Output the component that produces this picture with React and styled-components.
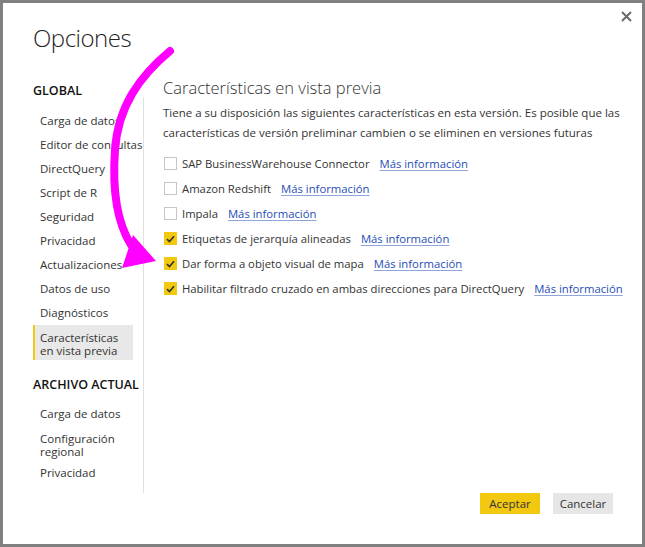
import styled, { createGlobalStyle } from "styled-components";

const GlobalStyle = createGlobalStyle`
  html, body {
    margin: 0;
    padding: 0;
    background: #ffffff;
  }

  body {
    font-family: "Open Sans", "Noto Sans", sans-serif;
    color: #333333;
  }
`;

const Dialog = styled.div`
  position: relative;
  box-sizing: border-box;
  width: 645px;
  height: 547px;
  border: 3px solid #808080;
  background: #ffffff;
  display: flex;
  flex-direction: column;
  overflow: hidden;
`;

const Header = styled.header`
  display: flex;
  justify-content: space-between;
  align-items: flex-start;
  height: 73px;
  padding: 0 10px 0 30px;
  box-sizing: border-box;
`;

const Title = styled.h1`
  margin: 19px 0 0;
  font-size: 24px;
  font-weight: 300;
  letter-spacing: -0.5px;
  line-height: 32px;
  color: #252423;
`;

const CloseButton = styled.button`
  margin-top: 8px;
  padding: 0;
  width: 11px;
  height: 11px;
  border: none;
  background: none;
  display: flex;
  cursor: pointer;
`;

const Body = styled.div`
  display: grid;
  grid-template-columns: 140px 1px 1fr;
  height: 417px;
`;

const Sidebar = styled.nav`
  display: flex;
  flex-direction: column;
  padding-left: 30px;
`;

const SectionLabel = styled.div`
  margin-top: ${(p) => p.$top}px;
  font-size: 12.5px;
  font-weight: 600;
  line-height: 16px;
  color: #111111;
  white-space: nowrap;
`;

const NavList = styled.ul`
  list-style: none;
  margin: ${(p) => p.$top}px 0 0;
  padding: 0;
  width: 100px;
`;

const NavItem = styled.li`
  box-sizing: border-box;
  padding: ${(p) => (p.$double ? "6px 0 3px 5px" : "0 0 0 5px")};
  line-height: ${(p) => (p.$double ? "13px" : "24px")};
  white-space: ${(p) => (p.$double ? "normal" : "nowrap")};
  font-size: 11.5px;
  color: #333333;
  border-left: 2px solid ${(p) => (p.$active ? "#f2c811" : "transparent")};
  background: ${(p) => (p.$active ? "#e8e8e8" : "transparent")};
`;

const Divider = styled.div`
  margin-top: 21px;
  background: #e1e1e1;
`;

const Content = styled.section`
  padding: 1px 0 0 19px;
  min-width: 0;
`;

const Heading = styled.h2`
  margin: 0;
  font-size: 16.5px;
  font-weight: 300;
  line-height: 22px;
  color: #333333;
`;

const Description = styled.p`
  margin: 4px 20px 0 0;
  font-size: 11.5px;
  line-height: 20px;
  color: #333333;
`;

const FeatureList = styled.ul`
  list-style: none;
  margin: 8px 0 0;
  padding: 0;
`;

const FeatureRow = styled.li`
  display: flex;
  align-items: center;
  height: 25px;
  font-size: 11.3px;
  color: #333333;
  white-space: nowrap;
`;

const Box = styled.span`
  box-sizing: border-box;
  flex: none;
  width: 13px;
  height: 13px;
  margin: 0 5px 0 1px;
  display: flex;
  align-items: center;
  justify-content: center;
  border: ${(p) => (p.$checked ? "none" : "1px solid #c6c6c6")};
  background: ${(p) => (p.$checked ? "#f2c811" : "#ffffff")};
`;

const Link = styled.a`
  margin-left: 10px;
  color: #1f4db5;
  text-decoration: underline;
  text-decoration-color: #8fa6da;
  text-underline-offset: 2px;
`;

const Footer = styled.footer`
  display: flex;
  justify-content: flex-end;
  gap: 13px;
  padding-right: 29px;
`;

const Button = styled.button`
  width: 60px;
  height: 21px;
  padding: 0;
  border: none;
  font-family: "Open Sans", "Noto Sans", sans-serif;
  font-size: 11.5px;
  color: #333333;
  background: ${(p) => (p.$primary ? "#f2c811" : "#e6e6e6")};
  cursor: pointer;
`;

const Overlay = styled.svg`
  position: absolute;
  left: -3px;
  top: -3px;
  width: 645px;
  height: 547px;
  pointer-events: none;
`;

const globalItems = [
  "Carga de datos",
  "Editor de consultas",
  "DirectQuery",
  "Script de R",
  "Seguridad",
  "Privacidad",
  "Actualizaciones",
  "Datos de uso",
  "Diagnósticos",
];

const features = [
  { label: "SAP BusinessWarehouse Connector", checked: false },
  { label: "Amazon Redshift", checked: false },
  { label: "Impala", checked: false },
  { label: "Etiquetas de jerarquía alineadas", checked: true },
  { label: "Dar forma a objeto visual de mapa", checked: true },
  {
    label: "Habilitar filtrado cruzado en ambas direcciones para DirectQuery",
    checked: true,
  },
];

function Check() {
  return (
    <svg width="9" height="8" viewBox="0 0 9 8">
      <path d="M1 4.2 L3.5 6.6 L8 1.2" fill="none" stroke="#333" strokeWidth="1.6" />
    </svg>
  );
}

export default function App() {
  return (
    <>
      <GlobalStyle />
      <Dialog>
        <Header>
          <Title>Opciones</Title>
          <CloseButton aria-label="Cerrar">
            <svg width="11" height="11" viewBox="0 0 11 11">
              <path d="M1 1 L10 10 M10 1 L1 10" stroke="#6a6a6a" strokeWidth="2" />
            </svg>
          </CloseButton>
        </Header>

        <Body>
          <Sidebar>
            <SectionLabel $top={7}>GLOBAL</SectionLabel>
            <NavList $top={10}>
              {globalItems.map((item) => (
                <NavItem key={item}>{item}</NavItem>
              ))}
              <NavItem $double $active>
                Características en vista previa
              </NavItem>
            </NavList>
            <SectionLabel $top={17}>ARCHIVO ACTUAL</SectionLabel>
            <NavList $top={9}>
              <NavItem>Carga de datos</NavItem>
              <NavItem $double>Configuración regional</NavItem>
              <NavItem>Privacidad</NavItem>
            </NavList>
          </Sidebar>

          <Divider />

          <Content>
            <Heading>Características en vista previa</Heading>
            <Description>
              Tiene a su disposición las siguientes características en esta
              versión. Es posible que las características de versión
              preliminar cambien o se eliminen en versiones futuras
            </Description>
            <FeatureList>
              {features.map((f) => (
                <FeatureRow key={f.label}>
                  <Box $checked={f.checked}>{f.checked && <Check />}</Box>
                  {f.label}
                  <Link href="#">Más información</Link>
                </FeatureRow>
              ))}
            </FeatureList>
          </Content>
        </Body>

        <Footer>
          <Button $primary>Aceptar</Button>
          <Button>Cancelar</Button>
        </Footer>

        <Overlay viewBox="0 0 645 547">
          <path
            d="M170 51 C 140 76 118 106 115 150 C 112 192 118 224 131 245"
            fill="none"
            stroke="#ff00ff"
            strokeWidth="8"
            strokeLinecap="round"
          />
          <polygon points="133,235 122,268 156,261" fill="#ff00ff" />
        </Overlay>
      </Dialog>
    </>
  );
}
